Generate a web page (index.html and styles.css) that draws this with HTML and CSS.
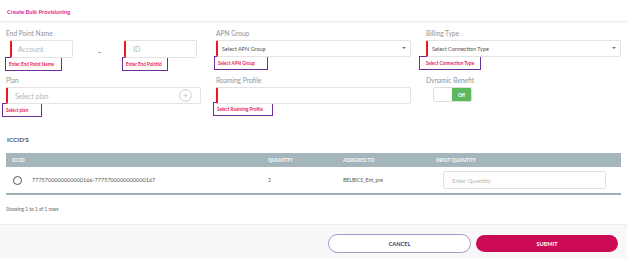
FILE: index.html
```html
<!DOCTYPE html>
<html>
<head>
<meta charset="utf-8">
<link rel="stylesheet" href="styles.css">
</head>
<body>
<div class="page">
  <div class="header"><span class="title">Create Bulk Provisioning</span></div>
  <div class="form">
    <div class="field">
      <div class="label">End Point Name</div>
      <div class="ep-row">
        <div class="ep-col">
          <div class="input req ep-account"><span class="ph">Account</span></div>
          <div class="err">Enter End Point Name</div>
        </div>
        <div class="dash">-</div>
        <div class="ep-col">
          <div class="input req ep-id"><span class="ph">ID</span></div>
          <div class="err">Enter End PointId</div>
        </div>
      </div>
    </div>
    <div class="field">
      <div class="label">APN Group</div>
      <div class="input req select"><span class="sel-text">Select APN Group</span><span class="caret"></span></div>
      <div class="err">Select APN Group</div>
    </div>
    <div class="field">
      <div class="label">Billing Type</div>
      <div class="input req select"><span class="sel-text">Select Connection Type</span><span class="caret"></span></div>
      <div class="err">Select Connection Type</div>
    </div>
    <div class="field">
      <div class="label">Plan</div>
      <div class="input req plan"><span class="ph">Select plan</span>
        <svg class="plus" width="13" height="13" viewBox="0 0 13 13"><circle cx="6.5" cy="6.5" r="5.8" fill="none" stroke="#c8c8c8" stroke-width="0.9"/><path d="M6.5 4.3v4.4M4.3 6.5h4.4" stroke="#c8c8c8" stroke-width="0.8"/></svg>
      </div>
      <div class="err err-plan">Select plan</div>
    </div>
    <div class="field">
      <div class="label">Roaming Profile</div>
      <div class="input req"></div>
      <div class="err">Select Roaming Profile</div>
    </div>
    <div class="field">
      <div class="label">Dynamic Benefit</div>
      <div class="toggle"><span class="t-off"></span><span class="t-on">Off</span></div>
    </div>
  </div>

  <div class="iccid">
    <div class="section-title">ICCID'S</div>
    <div class="table">
      <div class="thead">
        <div class="cell">ICCID</div>
        <div class="cell">QUANTITY</div>
        <div class="cell">ASSIGNED TO</div>
        <div class="cell">INPUT QUANTITY</div>
      </div>
      <div class="trow">
        <div class="cell first"><span class="radio"></span><span>7775700000000000166-7775700000000000167</span></div>
        <div class="cell">2</div>
        <div class="cell">BELBICS_Ent_pre</div>
        <div class="cell"><div class="qty">Enter Quantity</div></div>
      </div>
    </div>
    <div class="showing">Showing 1 to 1 of 1 rows</div>
  </div>

  <div class="footer">
    <button class="btn cancel">CANCEL</button>
    <button class="btn submit">SUBMIT</button>
  </div>
</div>
</body>
</html>
```

FILE: styles.css
```css
* { box-sizing: border-box; }
html, body { margin: 0; padding: 0; }
body {
  font-family: Lato, "Open Sans", sans-serif;
  background: #fff;
  width: 627px;
  height: 258px;
  overflow: hidden;
}
.page { display: flex; flex-direction: column; height: 258px; }
.header {
  height: 22px;
  flex: none;
  padding: 8px 0 0 7px;
  border-bottom: 1px solid #ececec;
  box-shadow: 0 1px 2px rgba(0,0,0,0.04);
}
.title { font-size: 5.8px; font-weight: 700; color: #e0288c; display: block; line-height: 7px; }

.form {
  display: grid;
  grid-template-columns: 195px 195px 195px;
  grid-template-rows: 44px auto;
  column-gap: 15px;
  row-gap: 3px;
  padding: 7px 0 0 6px;
  height: 110px;
  flex: none;
}
.field { display: flex; flex-direction: column; align-items: flex-start; }
.label { font-size: 6.6px; color: #8b96a0; line-height: 9px; height: 9px; margin-bottom: 2px; }
.input {
  width: 195px;
  height: 17px;
  border: 1px solid #e3e3e3;
  border-radius: 2px;
  background: #fff;
  display: flex;
  align-items: center;
  position: relative;
  flex: none;
}
.req { border-left: 2px solid #f0141e; }
.ph { font-size: 7px; color: #b5b5b5; }
.ep-row { display: flex; align-items: flex-start; margin-left: 4px; }
.ep-col { display: flex; flex-direction: column; align-items: flex-start; }
.ep-account { width: 63px; height: 18px; padding-left: 6px; }
.ep-id { width: 73px; height: 18px; padding-left: 7px; }
.dash { width: 51px; text-align: center; padding-left: 2px; font-size: 9px; color: #777; margin-top: 6px; }
.select { padding-left: 4px; }
.sel-text { font-size: 5.5px; color: #555; }
.caret {
  position: absolute; right: 4px; top: 6px;
  border-left: 2px solid transparent; border-right: 2px solid transparent; border-top: 2.5px solid #777;
}
.plan { padding-left: 7px; justify-content: space-between; padding-right: 8px; }
.plus { display: block; }
.err {
  margin-top: -1px;
  margin-left: -3px;
  border: 1.5px solid #6a2f9a;
  height: 14px;
  padding: 0 3px 0 3px;
  font-size: 4.6px;
  font-weight: 700;
  color: #e8185a;
  display: flex;
  align-items: center;
  white-space: nowrap;
  flex: none;
}
.ep-col .err { margin-left: -5px; }
.ep-col:last-child .err { margin-left: -2px; }
.err-plan { margin-left: -4px; width: 40px; }
.field:nth-child(2) .err { width: 54px; margin-left: -2px; }
.field:nth-child(3) .err { width: 62px; margin-left: -7px; padding-left: 6px; }
.field:nth-child(5) .err { width: 60px; margin-left: -3px; margin-top: -2px; }
.ep-col:first-child .err { width: 57px; }
.ep-col:last-child .err { width: 46px; }

.toggle {
  margin-left: 7px;
  display: flex;
  width: 39px;
  height: 15px;
  border: 1px solid #dedede;
  border-radius: 2px;
  overflow: hidden;
}
.t-off { flex: 1; background: #fff; }
.t-on {
  width: 19px; background: #5cb85c; color: #fff;
  font-size: 4.8px; font-weight: 700;
  display: flex; align-items: center; justify-content: center;
}

.iccid { padding: 4px 6px 0 6px; height: 93px; flex: none; border-bottom: 1px solid #ececec; }
.section-title { font-size: 6.4px; font-weight: 700; color: #4b5563; line-height: 8px; margin-left: 1px; }
.table { margin-top: 9px; width: 615px; border-bottom: 2px solid #9eafb7; }
.thead, .trow { display: grid; grid-template-columns: 256px 75px 93px 191px; align-items: center; }
.thead { background: #a5b5bc; height: 14px; }
.thead .cell { font-size: 4.8px; font-weight: 700; color: #fff; padding-left: 6px; }
.trow { height: 26px; background: #fff; }
.trow .cell { font-size: 5.2px; color: #555; padding-left: 6px; }
.trow .first { display: flex; align-items: center; padding-left: 7px; font-size: 5.5px; }
.radio {
  width: 9px; height: 9px; border: 1px solid #555; border-radius: 50%;
  display: inline-block; margin-right: 10px;
}
.qty {
  margin-left: 7px;
  width: 163px; height: 18px;
  border: 1px solid #e0e0e0; border-radius: 2px;
  font-size: 6px; color: #b5b5b5;
  display: flex; align-items: center; padding-left: 8px;
}
.showing { font-size: 4.8px; color: #666; margin-top: 11px; }

.footer {
  flex: 1;
  background: #f8f8f8;
  display: flex;
  justify-content: flex-end;
  align-items: flex-start;
  gap: 5px;
  padding: 9px 9px 0 0;
}
.btn {
  font-family: Lato, sans-serif;
  font-size: 5.6px; font-weight: 700;
  width: 143px; height: 19px;
  border-radius: 10px;
  cursor: pointer;
}
.cancel { background: #fff; border: 1px solid #9c9ccc; color: #333a6e; }
.submit { background: #cc0a56; border: none; color: #fff; height: 17px; width: 142px; margin-top: 1px; }
```
